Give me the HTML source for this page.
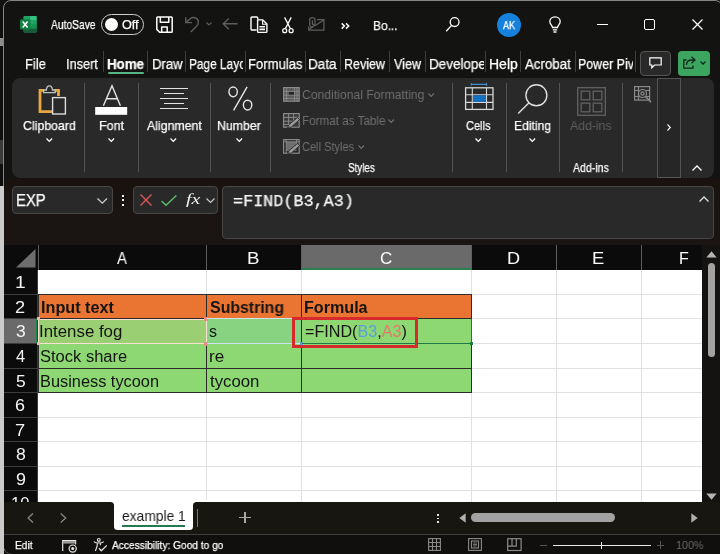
<!DOCTYPE html>
<html>
<head>
<meta charset="utf-8">
<title>Excel</title>
<style>
*{box-sizing:border-box;margin:0;padding:0}
html,body{width:720px;height:554px;overflow:hidden;background:#141210}
body{font-family:"Liberation Sans",sans-serif;color:#fff;position:relative}
.abs{position:absolute}
svg{position:absolute;overflow:visible}
.t{position:absolute;white-space:nowrap;line-height:1;transform-origin:0 50%;will-change:transform}
.w{-webkit-text-stroke:0.25px #fff}
.fbox{position:absolute;background:#292929;border:1px solid #474747;border-radius:4px}
</style>
</head>
<body>
<div class="abs" style="left:3px;top:0;width:720px;height:554px;background:#131311;border:1px solid #868686;border-radius:8px"></div>
<div class="abs" style="left:0px;top:8px;width:3.2px;height:178px;background:#0f0f0f;"></div>
<div class="abs" style="left:0px;top:38px;width:2.6px;height:8px;background:#8e8e8e;"></div>
<div class="abs" style="left:0px;top:140px;width:2.6px;height:24px;background:#3a3a3a;"></div>
<div class="abs" style="left:0;top:186px;width:4.2px;height:368px;background:#cbcbcb"></div>
<svg style="left:20px;top:15.5px" width="17" height="17" viewBox="0 0 17 17">
<path d="M4.6 0 H15.6 Q16.6 0 16.6 1 V15.6 Q16.6 16.6 15.6 16.6 H4.6 Q3.6 16.6 3.6 15.6 V1 Q3.6 0 4.6 0 Z" fill="#21a366"/>
<path d="M10.1 0 H15.6 Q16.6 0 16.6 1 V4.2 H10.1 Z" fill="#33c481"/>
<rect x="3.6" y="0.6" width="6.5" height="3.6" fill="#21a366"/>
<rect x="10.1" y="4.2" width="6.5" height="4.1" fill="#21a366"/>
<rect x="10.1" y="8.3" width="6.5" height="4.1" fill="#129452"/>
<rect x="3.6" y="4.2" width="6.5" height="8.2" fill="#107c41"/>
<path d="M3.6 12.4 H16.6 V15.6 Q16.6 16.6 15.6 16.6 H4.6 Q3.6 16.6 3.6 15.6 Z" fill="#185c37"/>
<rect x="0" y="3.3" width="10.3" height="10.3" rx="1" fill="#117e43"/>
<path d="M2.7 5.5 L7.6 11.5 M7.6 5.5 L2.7 11.5" stroke="#fff" stroke-width="1.6"/>
</svg>
<div class="t w" style="left:50.98px;top:18.30px;font-size:13px;color:#fff;transform:scaleX(0.7890);">AutoSave</div>
<div class="abs" style="left:101px;top:14px;width:43px;height:21px;border:1.5px solid #cfcfcf;border-radius:11px"></div>
<div class="abs" style="left:105px;top:18px;width:13px;height:13px;border-radius:50%;background:#fff"></div>
<div class="t w" style="left:122.40px;top:18.84px;font-size:12px;color:#fff;transform:scaleX(1.0502);">Off</div>
<svg style="left:155.5px;top:16px" width="17" height="17" viewBox="0 0 17 17" fill="none" stroke="#fff" stroke-width="1.5" stroke-linejoin="round">
<path d="M1.6 0.9 H15.4 Q16.2 0.9 16.2 1.7 V15.4 Q16.2 16.2 15.4 16.2 H3.6 L0.8 13.4 V1.7 Q0.8 0.9 1.6 0.9 Z"/><path d="M4.3 1 V6.2 H12.8 V1"/><path d="M5.7 16 V11 H11.2 V16"/></svg>
<svg style="left:185px;top:17px" width="15" height="16" viewBox="0 0 15 16" fill="none" stroke="#5e5e5e" stroke-width="1.4">
<path d="M0.8 0.2 V5.6 H6.9"/><path d="M1 5.4 L5.3 1.7 C8 -0.5 12.5 0.6 13.3 4 C13.8 6.3 12.8 7.8 11.5 9.2 L5.8 15"/></svg>
<svg style="left:206px;top:22px" width="6" height="4" viewBox="0 0 6 4" fill="none" stroke="#5c5c5c" stroke-width="1.2"><path d="M0.5 0.5 L3 3 L5.5 0.5"/></svg>
<svg style="left:222px;top:18px" width="16" height="12" viewBox="0 0 16 12" fill="none" stroke="#5e5e5e" stroke-width="1.4"><path d="M15.6 5.8 H1.2 M6.8 0.5 L1.2 5.8 L6.8 11.3"/></svg>
<svg style="left:250px;top:16px" width="18" height="17" viewBox="0 0 18 17" fill="none" stroke="#fff" stroke-width="1.4" stroke-linejoin="round">
<path d="M6.6 14 H2.2 Q1 14 1 12.8 V2.2 Q1 1 2.2 1 H6.6 Q7.8 1 7.8 2.2 V3.6"/><path d="M7.6 3.9 H12.8 L16.9 8 V15.6 Q16.9 16.4 16.1 16.4 H8.4 Q7.6 16.4 7.6 15.6 Z"/><path d="M12.6 4 V8.2 H16.8" stroke-width="1.1"/><path d="M9.4 10.8 H15 M9.4 13.4 H15" stroke-width="1.6"/></svg>
<svg style="left:281.5px;top:16.5px" width="12" height="17" viewBox="0 0 12 17" fill="none" stroke="#fff" stroke-width="1.25">
<path d="M2.6 0.4 L8.4 11.6 M9.2 0.4 L3.4 11.6"/><circle cx="2.7" cy="13.7" r="2"/><circle cx="9.1" cy="13.7" r="2"/></svg>
<svg style="left:308px;top:16.5px" width="17" height="14" viewBox="0 0 17 14" fill="none" stroke="#5e5e5e" stroke-width="1.25">
<path d="M9 2.6 H15.9 V13 H0.7 V9.5"/><path d="M0.9 12.6 L7.2 8 M15.7 3 L7 8.8"/><path d="M4.4 3.2 V6.4 C4.4 8.2 7 8.2 7 6.4 V2.8 C7 -0.2 1.7 -0.2 1.7 2.8 V7.6 C1.7 10 4 10.4 5.2 10"/></svg>
<svg style="left:340.5px;top:22.5px" width="9" height="6" viewBox="0 0 9 6" fill="none" stroke="#fff" stroke-width="1.5"><path d="M0.7 0.4 L3.4 3 L0.7 5.6 M5 0.4 L7.7 3 L5 5.6"/></svg>
<div class="t w" style="left:373.02px;top:18.50px;font-size:13px;color:#fff;transform:scaleX(0.9190);">Bo...</div>
<svg style="left:445px;top:15px" width="16" height="17" viewBox="0 0 16 17" fill="none" stroke="#fff" stroke-width="1.3"><circle cx="9.6" cy="7.1" r="4.4"/><path d="M6.6 10.4 L1.2 16.3"/></svg>
<div class="abs" style="left:496.7px;top:12.6px;width:24.2px;height:24.2px;border-radius:50%;background:#1681dc"></div>
<div class="t w" style="left:502.98px;top:19.71px;font-size:10.5px;color:#fff;transform:scaleX(0.8653);">AK</div>
<svg style="left:549px;top:16.3px" width="12" height="17" viewBox="0 0 12 17" fill="none" stroke="#fff" stroke-width="1.3">
<path d="M3.5 11.5 C3.5 9.5 0.8 8.5 0.8 5.5 C0.8 2.8 3 0.8 6 0.8 C9 0.8 11.2 2.8 11.2 5.5 C11.2 8.5 8.5 9.5 8.5 11.5 Z"/><path d="M3.8 13.8 H8.2 M4.5 16 H7.5"/></svg>
<div class="abs" style="left:597px;top:23.5px;width:11px;height:1.3px;background:#fff;"></div>
<div class="abs" style="left:644px;top:19px;width:11px;height:11px;border:1.4px solid #fff;border-radius:2px"></div>
<svg style="left:692px;top:19px" width="11" height="11" viewBox="0 0 11 11" fill="none" stroke="#fff" stroke-width="1.3"><path d="M0.5 0.5 L10.5 10.5 M10.5 0.5 L0.5 10.5"/></svg>
<div class="t w" style="left:24.63px;top:57.15px;font-size:14px;color:#fff;transform:scaleX(0.9284);">File</div>
<div class="t w" style="left:65.52px;top:57.15px;font-size:14px;color:#fff;transform:scaleX(0.9102);">Insert</div>
<div class="t w" style="left:107.41px;top:57.15px;font-size:14px;color:#fff;font-weight:bold;transform:scaleX(0.9525);">Home</div>
<div class="abs" style="left:108.3px;top:72px;width:35.7px;height:2.3px;background:#57b583;border-radius:1px"></div>
<div class="t w" style="left:151.62px;top:57.15px;font-size:14px;color:#fff;transform:scaleX(0.9380);">Draw</div>
<div class="t w" style="left:189.13px;top:57.15px;font-size:14px;color:#fff;transform:scaleX(0.8486);clip-path:inset(-5px 14.77px -5px 0);">Page Layout</div>
<div class="t w" style="left:248.23px;top:57.15px;font-size:14px;color:#fff;transform:scaleX(0.9349);">Formulas</div>
<div class="t w" style="left:308.19px;top:57.15px;font-size:14px;color:#fff;transform:scaleX(0.9640);">Data</div>
<div class="t w" style="left:343.97px;top:57.15px;font-size:14px;color:#fff;transform:scaleX(0.8930);">Review</div>
<div class="t w" style="left:393.94px;top:57.15px;font-size:14px;color:#fff;transform:scaleX(0.8981);">View</div>
<div class="t w" style="left:428.59px;top:57.15px;font-size:14px;color:#fff;transform:scaleX(0.9631);clip-path:inset(-5px 7.43px -5px 0);">Developer</div>
<div class="t w" style="left:488.87px;top:57.15px;font-size:14px;color:#fff;transform:scaleX(0.9868);">Help</div>
<div class="t w" style="left:525.27px;top:57.15px;font-size:14px;color:#fff;transform:scaleX(0.9498);">Acrobat</div>
<div class="t w" style="left:577.88px;top:57.15px;font-size:14px;color:#fff;transform:scaleX(0.8882);clip-path:inset(-5px 13.54px -5px 0);">Power Pivot</div>
<div class="abs" style="left:102.8px;top:51px;width:1px;height:21px;background:#404040;"></div>
<div class="abs" style="left:147.2px;top:51px;width:1px;height:21px;background:#404040;"></div>
<div class="abs" style="left:185.2px;top:51px;width:1px;height:21px;background:#404040;"></div>
<div class="abs" style="left:245.2px;top:51px;width:1px;height:21px;background:#404040;"></div>
<div class="abs" style="left:305.2px;top:51px;width:1px;height:21px;background:#404040;"></div>
<div class="abs" style="left:339.5px;top:51px;width:1px;height:21px;background:#404040;"></div>
<div class="abs" style="left:388.8px;top:51px;width:1px;height:21px;background:#404040;"></div>
<div class="abs" style="left:425.0px;top:51px;width:1px;height:21px;background:#404040;"></div>
<div class="abs" style="left:485.2px;top:51px;width:1px;height:21px;background:#404040;"></div>
<div class="abs" style="left:520.2px;top:51px;width:1px;height:21px;background:#404040;"></div>
<div class="abs" style="left:574.5px;top:51px;width:1px;height:21px;background:#404040;"></div>
<div class="abs" style="left:634.5px;top:51px;width:1px;height:21px;background:#404040;"></div>
<div class="abs" style="left:640px;top:51px;width:31px;height:25px;background:#292929;border:1px solid #555;border-radius:4px"></div>
<svg style="left:649px;top:57px" width="13" height="12" viewBox="0 0 13 12" fill="none" stroke="#fff" stroke-width="1.2"><path d="M0.8 0.8 H12.2 V8 H5.5 L2.8 10.8 V8 H0.8 Z"/></svg>
<div class="abs" style="left:678px;top:51px;width:32px;height:25px;background:#3ca55f;border-radius:4px"></div>
<svg style="left:683px;top:56px" width="13" height="13" viewBox="0 0 13 13" fill="none" stroke="#0e2a18" stroke-width="1.3"><path d="M3.5 4 H0.8 V12.2 H10 V9.5"/><path d="M3.5 9 C3.5 5.5 6 4 9 4 H11.5 M8.5 0.8 L12 4 L8.5 7.2"/></svg>
<svg style="left:699.5px;top:61px" width="6" height="4" viewBox="0 0 6 4" fill="none" stroke="#0e2a18" stroke-width="1.3"><path d="M0.5 0.5 L3 3 L5.5 0.5"/></svg>
<div class="abs" style="left:12px;top:78px;width:701.5px;height:100px;background:#292929;border-radius:8px"></div>
<div class="abs" style="left:84.0px;top:83px;width:1px;height:89px;background:#545454;"></div>
<div class="abs" style="left:137.8px;top:83px;width:1px;height:89px;background:#545454;"></div>
<div class="abs" style="left:209.5px;top:83px;width:1px;height:89px;background:#545454;"></div>
<div class="abs" style="left:270.0px;top:83px;width:1px;height:89px;background:#545454;"></div>
<div class="abs" style="left:451.9px;top:83px;width:1px;height:89px;background:#545454;"></div>
<div class="abs" style="left:505.5px;top:83px;width:1px;height:89px;background:#545454;"></div>
<div class="abs" style="left:558.9px;top:83px;width:1px;height:89px;background:#545454;"></div>
<div class="abs" style="left:621.5px;top:83px;width:1px;height:89px;background:#545454;"></div>
<svg style="left:38px;top:85px" width="29" height="30" viewBox="0 0 29 30" fill="none">
<path d="M6 5.4 H2 V26.6 H14" stroke="#eaa640" stroke-width="2.8"/><path d="M16.5 5.4 H20.5 V11" stroke="#eaa640" stroke-width="2.8"/>
<path d="M5.6 7.6 V5 H8.4 C8.6 -0.6 14.2 -0.6 14.4 5 H17.2 V7.6 Z" stroke="#c4c4c4" stroke-width="1.3" fill="#292929"/>
<rect x="14.6" y="12.6" width="12.8" height="16.4" stroke="#dcdcdc" stroke-width="1.4" fill="#292929"/></svg>
<div class="t w" style="left:22.97px;top:118.60px;font-size:13px;color:#fff;transform:scaleX(0.9493);">Clipboard</div>
<svg style="left:45.7px;top:137.95000000000002px" width="6.6" height="3.9" viewBox="0 0 6.6 3.9" fill="none" stroke="#fff" stroke-width="1.3"><path d="M0.5 0.5 L3.3 3.4 L6.1 0.5"/></svg>
<svg style="left:95px;top:84px" width="33" height="31" viewBox="0 0 33 31" fill="none"><path d="M8.4 21.8 L17 1.8 L25.4 21.8 M11.4 14.8 H22.4" stroke="#e6e6e6" stroke-width="1.4"/><rect x="0.2" y="23" width="32" height="7.8" fill="#fff"/></svg>
<div class="t w" style="left:98.68px;top:118.60px;font-size:13px;color:#fff;transform:scaleX(0.9577);">Font</div>
<svg style="left:107.7px;top:137.95000000000002px" width="6.6" height="3.9" viewBox="0 0 6.6 3.9" fill="none" stroke="#fff" stroke-width="1.3"><path d="M0.5 0.5 L3.3 3.4 L6.1 0.5"/></svg>
<div class="abs" style="left:159.8px;top:87.6px;width:28.19999999999999px;height:1.2px;background:#e4e4e4;"></div>
<div class="abs" style="left:164px;top:92.7px;width:20px;height:1.2px;background:#e4e4e4;"></div>
<div class="abs" style="left:159.8px;top:97.7px;width:28.19999999999999px;height:1.2px;background:#e4e4e4;"></div>
<div class="abs" style="left:164px;top:102.8px;width:20px;height:1.2px;background:#e4e4e4;"></div>
<div class="abs" style="left:159.8px;top:107.8px;width:28.19999999999999px;height:1.2px;background:#e4e4e4;"></div>
<div class="t w" style="left:146.68px;top:118.60px;font-size:13px;color:#fff;transform:scaleX(0.9465);">Alignment</div>
<svg style="left:169.7px;top:137.95000000000002px" width="6.6" height="3.9" viewBox="0 0 6.6 3.9" fill="none" stroke="#fff" stroke-width="1.3"><path d="M0.5 0.5 L3.3 3.4 L6.1 0.5"/></svg>
<svg style="left:227.6px;top:86.4px" width="25.2" height="25.4" viewBox="0 0 27 26" preserveAspectRatio="none" fill="none" stroke="#e6e6e6" stroke-width="1.5"><ellipse cx="5.5" cy="6" rx="4.5" ry="5"/><ellipse cx="21" cy="19.5" rx="4.5" ry="5"/><path d="M20.5 1 L6 25"/></svg>
<div class="t w" style="left:217.49px;top:118.60px;font-size:13px;color:#fff;transform:scaleX(0.9454);">Number</div>
<svg style="left:236.2px;top:137.95000000000002px" width="6.6" height="3.9" viewBox="0 0 6.6 3.9" fill="none" stroke="#fff" stroke-width="1.3"><path d="M0.5 0.5 L3.3 3.4 L6.1 0.5"/></svg>
<svg style="left:282.5px;top:86.8px" width="17" height="15" viewBox="0 0 17 15" fill="none" stroke="#909090" stroke-width="1.1"><rect x="0.6" y="0.6" width="15.6" height="13.6" fill="#5a5a5a"/><rect x="6" y="4.6" width="5" height="3.6" fill="#262626" stroke="none"/><path d="M0.6 4.4 H16.2 M0.6 8.2 H16.2 M0.6 11.4 H16.2 M3.6 0.6 V14.2 M11.6 0.6 V14.2 M14 0.6 V14.2" stroke="#8a8a8a" stroke-width="0.9"/></svg>
<svg style="left:282.5px;top:112.8px" width="17" height="15" viewBox="0 0 17 15" fill="none" stroke="#909090" stroke-width="1.1"><rect x="0.6" y="0.6" width="15.6" height="13.6" fill="#3a3a3a"/><path d="M0.6 4.4 H16.2 M0.6 8.2 H16.2 M0.6 11.4 H8 M5.6 0.6 V14.2 M10.6 0.6 V8" stroke-width="0.9"/><path d="M4.6 14.4 L6 11.6 L14.4 4.6 L16.6 6.6 L8.4 14 Z" fill="#9a9a9a" stroke="#292929" stroke-width="0.9"/></svg>
<svg style="left:282.5px;top:138.8px" width="17" height="15" viewBox="0 0 17 15" fill="none" stroke="#909090" stroke-width="1.1"><rect x="0.6" y="0.6" width="15.6" height="13.6"/><rect x="3.4" y="3" width="10" height="9" fill="#6e6e6e" stroke="none"/><path d="M0.6 2.8 H16.2 M3.2 0.6 V14.2 M13.6 0.6 V7" stroke-width="0.9"/><path d="M4.6 14.4 L6 11.6 L14.4 4.6 L16.6 6.6 L8.4 14 Z" fill="#9a9a9a" stroke="#292929" stroke-width="0.9"/></svg>
<div class="t" style="left:302.38px;top:88.30px;font-size:13px;color:#6e6e6e;transform:scaleX(0.9359);">Conditional Formatting</div>
<svg style="left:428.1px;top:92.8px" width="6.4" height="3.8" viewBox="0 0 6.4 3.8" fill="none" stroke="#6e6e6e" stroke-width="1.2"><path d="M0.5 0.5 L3.2 3.3 L5.9 0.5"/></svg>
<div class="t" style="left:302.04px;top:114.20px;font-size:13px;color:#6e6e6e;transform:scaleX(0.8979);">Format as Table</div>
<svg style="left:388.3px;top:118.6px" width="6.4" height="3.8" viewBox="0 0 6.4 3.8" fill="none" stroke="#6e6e6e" stroke-width="1.2"><path d="M0.5 0.5 L3.2 3.3 L5.9 0.5"/></svg>
<div class="t" style="left:302.44px;top:140.30px;font-size:13px;color:#6e6e6e;transform:scaleX(0.8461);">Cell Styles</div>
<svg style="left:358.0px;top:144.79999999999998px" width="6.4" height="3.8" viewBox="0 0 6.4 3.8" fill="none" stroke="#6e6e6e" stroke-width="1.2"><path d="M0.5 0.5 L3.2 3.3 L5.9 0.5"/></svg>
<div class="t w" style="left:347.55px;top:162.34px;font-size:12px;color:#fff;transform:scaleX(0.8202);">Styles</div>
<svg style="left:465px;top:83px" width="29" height="28" viewBox="0 0 29 28" fill="none">
<path d="M6.2 1.4 H21.6 M6.2 0 V2.8 M21.6 0 V2.8" stroke="#3f8fd0" stroke-width="1.1"/>
<rect x="0.6" y="4.8" width="27.4" height="21.6" stroke="#d8d8d8" stroke-width="1.3"/><path d="M0.6 11.8 H28 M0.6 19.4 H28 M7.3 4.8 V26.4 M21.5 4.8 V26.4" stroke="#d8d8d8" stroke-width="1.1"/>
<rect x="7.9" y="12.4" width="13" height="6.4" fill="#1470c4"/></svg>
<div class="t w" style="left:466.44px;top:118.60px;font-size:13px;color:#fff;transform:scaleX(0.8465);">Cells</div>
<svg style="left:475.2px;top:137.95000000000002px" width="6.6" height="3.9" viewBox="0 0 6.6 3.9" fill="none" stroke="#fff" stroke-width="1.3"><path d="M0.5 0.5 L3.3 3.4 L6.1 0.5"/></svg>
<svg style="left:517px;top:83px" width="32" height="32" viewBox="0 0 32 32" fill="none" stroke="#e0e0e0" stroke-width="1.4"><circle cx="19.4" cy="12.3" r="10.5"/><path d="M12 19.7 L1.2 30.6"/></svg>
<div class="t w" style="left:513.71px;top:118.60px;font-size:13px;color:#fff;transform:scaleX(0.9328);">Editing</div>
<svg style="left:529.0px;top:137.95000000000002px" width="6.6" height="3.9" viewBox="0 0 6.6 3.9" fill="none" stroke="#fff" stroke-width="1.3"><path d="M0.5 0.5 L3.3 3.4 L6.1 0.5"/></svg>
<svg style="left:577px;top:87px" width="29" height="29" viewBox="0 0 29 29" fill="none" stroke="#5e5e5e" stroke-width="1.4"><rect x="0.7" y="0.7" width="27.6" height="27.6"/><rect x="4.2" y="4.2" width="8.6" height="8.6"/><rect x="16.2" y="4.2" width="8.6" height="8.6"/><rect x="4.2" y="16.2" width="8.6" height="8.6"/><rect x="16.2" y="16.2" width="8.6" height="8.6"/></svg>
<div class="t" style="left:569.98px;top:118.60px;font-size:13px;color:#5e5e5e;transform:scaleX(0.9408);">Add-ins</div>
<div class="t w" style="left:572.98px;top:162.04px;font-size:12px;color:#fff;transform:scaleX(0.8799);">Add-ins</div>
<svg style="left:634px;top:86px" width="18" height="17" viewBox="0 0 18 17" fill="none" stroke="#8a8a8a" stroke-width="1.2"><rect x="0.6" y="0.6" width="15" height="13.5"/><path d="M0.6 4.5 H15.6 M0.6 10.5 H15.6 M4.5 0.6 V14"/><circle cx="8.5" cy="7.5" r="4" fill="#292929"/><circle cx="8.5" cy="7.5" r="1.6"/><path d="M11.5 10.5 L17 16.2" stroke-width="1.6"/></svg>
<div class="abs" style="left:657px;top:78px;width:24px;height:100px;background:#262626;border:1px solid #555"></div>
<svg style="left:667px;top:124px" width="4" height="7" viewBox="0 0 4 7" fill="none" stroke="#fff" stroke-width="1.1"><path d="M0.5 0.5 L3.3 3.5 L0.5 6.5"/></svg>
<svg style="left:692px;top:165px" width="10" height="6" viewBox="0 0 10 6" fill="none" stroke="#fff" stroke-width="1.3"><path d="M0.5 5.5 L5 1 L9.5 5.5"/></svg>
<div class="abs" style="left:4px;top:179px;width:716px;height:67px;background:linear-gradient(#19120f,#1a1412 40%)"></div>
<div class="fbox" style="left:12px;top:186px;width:101px;height:28px"></div>
<div class="t w" style="left:16.08px;top:193.06px;font-size:16px;color:#fff;transform:scaleX(0.9277);">EXP</div>
<svg style="left:96.75px;top:198.39999999999998px" width="10.5" height="5.6" viewBox="0 0 10.5 5.6" fill="none" stroke="#d0d0d0" stroke-width="1.3"><path d="M0.5 0.5 L5.25 5.1 L10.0 0.5"/></svg>
<div class="abs" style="left:121.8px;top:194.9px;width:2.1px;height:2.1px;background:#f0f0f0;"></div>
<div class="abs" style="left:121.8px;top:199.2px;width:2.1px;height:2.1px;background:#f0f0f0;"></div>
<div class="abs" style="left:121.8px;top:203.5px;width:2.1px;height:2.1px;background:#f0f0f0;"></div>
<div class="fbox" style="left:133px;top:186px;width:85px;height:28px"></div>
<svg style="left:139.5px;top:194px" width="12" height="12" viewBox="0 0 12 12" fill="none" stroke="#e25757" stroke-width="1.3"><path d="M0.5 0.5 L11.5 11.5 M11.5 0.5 L0.5 11.5"/></svg>
<svg style="left:161px;top:194.5px" width="16" height="11" viewBox="0 0 16 11" fill="none" stroke="#5cbf6a" stroke-width="1.4"><path d="M0.6 6 L5 10.2 L15.4 0.6"/></svg>
<div class="t" style="left:186.48px;top:192.44px;font-size:15px;color:#f0f0f0;font-style:italic;font-family:'Liberation Serif',serif;transform:scaleX(1.3274);">fx</div>
<svg style="left:206.0px;top:198.0px" width="9" height="5" viewBox="0 0 9 5" fill="none" stroke="#c8c8c8" stroke-width="1.2"><path d="M0.5 0.5 L4.5 4.5 L8.5 0.5"/></svg>
<div class="fbox" style="left:222px;top:186px;width:492px;height:52.7px"></div>
<div class="t w" style="left:233.35px;top:193.37px;font-size:17px;color:#f2f2f2;font-family:'Liberation Mono',serif;transform:scaleX(0.9873);">=FIND(B3,A3)</div>
<svg style="left:698.7px;top:195.5px" width="10" height="6" viewBox="0 0 10 6" fill="none" stroke="#e0e0e0" stroke-width="1.3"><path d="M0.5 5.5 L5 1 L9.5 5.5"/></svg>
<div class="abs" style="left:4px;top:245px;width:698px;height:24.7px;background:#0b0b0b;"></div>
<div class="abs" style="left:4px;top:270px;width:34px;height:232px;background:#0b0b0b;"></div>
<div class="abs" style="left:38px;top:269.7px;width:663.5px;height:232.3px;background:#fff;"></div>
<div class="abs" style="left:301.5px;top:245px;width:169.8px;height:24.7px;background:#6a6a6a;"></div>
<div class="abs" style="left:301.5px;top:268.2px;width:169.8px;height:1.5px;background:#2a7f50;"></div>
<svg style="left:16px;top:249px" width="20" height="19" viewBox="0 0 20 19"><path d="M19.5 0 V18.5 H0 Z" fill="#6e6e6e"/></svg>
<div class="t" style="left:117.01px;top:250.76px;font-size:16px;color:#fdfdfd;transform:scaleX(0.9355);">A</div>
<div class="abs" style="left:37.5px;top:245px;width:1px;height:24.7px;background:#5e5e5e;"></div>
<div class="t" style="left:247.26px;top:250.76px;font-size:16px;color:#fdfdfd;transform:scaleX(1.1655);">B</div>
<div class="abs" style="left:205.5px;top:245px;width:1px;height:24.7px;background:#5e5e5e;"></div>
<div class="t" style="left:380.17px;top:250.76px;font-size:16px;color:#fdfdfd;transform:scaleX(1.0605);">C</div>
<div class="abs" style="left:301.0px;top:245px;width:1px;height:24.7px;background:#5e5e5e;"></div>
<div class="t" style="left:506.79px;top:250.76px;font-size:16px;color:#fdfdfd;transform:scaleX(1.1339);">D</div>
<div class="abs" style="left:470.8px;top:245px;width:1px;height:24.7px;background:#5e5e5e;"></div>
<div class="t" style="left:592.04px;top:250.76px;font-size:16px;color:#fdfdfd;transform:scaleX(1.1445);">E</div>
<div class="abs" style="left:555.5px;top:245px;width:1px;height:24.7px;background:#5e5e5e;"></div>
<div class="t" style="left:679.19px;top:250.76px;font-size:16px;color:#fdfdfd;transform:scaleX(0.9974);">F</div>
<div class="abs" style="left:640.5px;top:245px;width:1px;height:24.7px;background:#5e5e5e;"></div>
<div class="abs" style="left:38px;top:293.5px;width:664px;height:1px;background:#e1e1e1;"></div>
<div class="abs" style="left:38px;top:318.0px;width:664px;height:1px;background:#e1e1e1;"></div>
<div class="abs" style="left:38px;top:342.8px;width:664px;height:1px;background:#e1e1e1;"></div>
<div class="abs" style="left:38px;top:367.5px;width:664px;height:1px;background:#e1e1e1;"></div>
<div class="abs" style="left:38px;top:392.0px;width:664px;height:1px;background:#e1e1e1;"></div>
<div class="abs" style="left:38px;top:416.5px;width:664px;height:1px;background:#e1e1e1;"></div>
<div class="abs" style="left:38px;top:441.0px;width:664px;height:1px;background:#e1e1e1;"></div>
<div class="abs" style="left:38px;top:465.5px;width:664px;height:1px;background:#e1e1e1;"></div>
<div class="abs" style="left:38px;top:490.0px;width:664px;height:1px;background:#e1e1e1;"></div>
<div class="abs" style="left:205.5px;top:270px;width:1px;height:232px;background:#e1e1e1;"></div>
<div class="abs" style="left:301.0px;top:270px;width:1px;height:232px;background:#e1e1e1;"></div>
<div class="abs" style="left:470.8px;top:270px;width:1px;height:232px;background:#e1e1e1;"></div>
<div class="abs" style="left:555.5px;top:270px;width:1px;height:232px;background:#e1e1e1;"></div>
<div class="abs" style="left:640.5px;top:270px;width:1px;height:232px;background:#e1e1e1;"></div>
<div class="abs" style="left:4px;top:318.5px;width:33.5px;height:24.8px;background:#6a6a6a;"></div>
<div class="abs" style="left:36.2px;top:318.5px;width:1.3px;height:24.8px;background:#1e8a4c;"></div>
<div class="abs" style="left:4px;top:293.5px;width:33.5px;height:1px;background:#3c3c3c;"></div>
<div class="t" style="left:14.90px;top:275.16px;font-size:16px;color:#f4f4f4;transform:scaleX(1.1996);">1</div>
<div class="abs" style="left:4px;top:318.0px;width:33.5px;height:1px;background:#3c3c3c;"></div>
<div class="t" style="left:15.45px;top:299.66px;font-size:16px;color:#f4f4f4;transform:scaleX(1.1353);">2</div>
<div class="abs" style="left:4px;top:342.8px;width:33.5px;height:1px;background:#3c3c3c;"></div>
<div class="t" style="left:15.70px;top:324.46px;font-size:16px;color:#f4f4f4;transform:scaleX(1.0909);">3</div>
<div class="abs" style="left:4px;top:367.5px;width:33.5px;height:1px;background:#3c3c3c;"></div>
<div class="t" style="left:15.99px;top:349.16px;font-size:16px;color:#f4f4f4;transform:scaleX(1.0264);">4</div>
<div class="abs" style="left:4px;top:392.0px;width:33.5px;height:1px;background:#3c3c3c;"></div>
<div class="t" style="left:15.66px;top:373.66px;font-size:16px;color:#f4f4f4;transform:scaleX(1.0909);">5</div>
<div class="abs" style="left:4px;top:416.5px;width:33.5px;height:1px;background:#3c3c3c;"></div>
<div class="t" style="left:15.45px;top:398.16px;font-size:16px;color:#f4f4f4;transform:scaleX(1.1209);">6</div>
<div class="abs" style="left:4px;top:441.0px;width:33.5px;height:1px;background:#3c3c3c;"></div>
<div class="t" style="left:15.43px;top:422.66px;font-size:16px;color:#f4f4f4;transform:scaleX(1.1378);">7</div>
<div class="abs" style="left:4px;top:465.5px;width:33.5px;height:1px;background:#3c3c3c;"></div>
<div class="t" style="left:15.60px;top:447.16px;font-size:16px;color:#f4f4f4;transform:scaleX(1.1023);">8</div>
<div class="abs" style="left:4px;top:490.0px;width:33.5px;height:1px;background:#3c3c3c;"></div>
<div class="t" style="left:15.52px;top:471.66px;font-size:16px;color:#f4f4f4;transform:scaleX(1.1197);">9</div>
<div class="abs" style="left:4px;top:514.5px;width:33.5px;height:1px;background:#3c3c3c;"></div>
<div class="t" style="left:10.96px;top:496.16px;font-size:16px;color:#f4f4f4;transform:scaleX(1.0375);">10</div>
<div class="abs" style="left:37px;top:270px;width:1px;height:232px;background:#3c3c3c;"></div>
<div class="abs" style="left:38px;top:294px;width:433.3px;height:24.5px;background:#ea7431;"></div>
<div class="abs" style="left:38px;top:318.5px;width:433.3px;height:74px;background:#8dd873;"></div>
<div class="abs" style="left:38px;top:318.5px;width:168px;height:24.8px;background:#9bcf73;"></div>
<div class="abs" style="left:206px;top:318.5px;width:95.5px;height:24.8px;background:#87d382;"></div>
<div class="abs" style="left:38px;top:293.5px;width:433.3px;height:1px;background:#2b2b2b;"></div>
<div class="abs" style="left:38px;top:318.0px;width:433.3px;height:1px;background:#2b2b2b;"></div>
<div class="abs" style="left:38px;top:342.8px;width:433.3px;height:1px;background:#2b2b2b;"></div>
<div class="abs" style="left:38px;top:367.5px;width:433.3px;height:1px;background:#2b2b2b;"></div>
<div class="abs" style="left:38px;top:392.0px;width:433.3px;height:1px;background:#2b2b2b;"></div>
<div class="abs" style="left:37.5px;top:294px;width:1px;height:98.5px;background:#2b2b2b;"></div>
<div class="abs" style="left:205.5px;top:294px;width:1px;height:98.5px;background:#2b2b2b;"></div>
<div class="abs" style="left:301.0px;top:294px;width:1px;height:98.5px;background:#2b2b2b;"></div>
<div class="abs" style="left:470.8px;top:294px;width:1px;height:98.5px;background:#2b2b2b;"></div>
<div class="t" style="left:40.62px;top:299.86px;font-size:16px;color:#141414;font-weight:bold;transform:scaleX(1.0123);">Input text</div>
<div class="t" style="left:209.54px;top:299.86px;font-size:16px;color:#141414;font-weight:bold;transform:scaleX(0.9913);">Substring</div>
<div class="t" style="left:304.32px;top:299.86px;font-size:16px;color:#141414;font-weight:bold;transform:scaleX(1.0073);">Formula</div>
<div class="t" style="left:39.45px;top:324.46px;font-size:16px;color:#141414;transform:scaleX(1.0526);">Intense fog</div>
<div class="t" style="left:40.25px;top:349.36px;font-size:16px;color:#141414;transform:scaleX(1.0319);">Stock share</div>
<div class="t" style="left:40.36px;top:373.86px;font-size:16px;color:#141414;transform:scaleX(1.0214);">Business tycoon</div>
<div class="t" style="left:209.27px;top:324.46px;font-size:16px;color:#141414;transform:scaleX(0.9747);">s</div>
<div class="t" style="left:208.87px;top:349.36px;font-size:16px;color:#141414;transform:scaleX(1.0680);">re</div>
<div class="t" style="left:209.75px;top:373.86px;font-size:16px;color:#141414;transform:scaleX(1.0467);">tycoon</div>
<div class="abs" style="left:38px;top:318.5px;width:168.5px;height:25.2px;border:1.5px solid #f7e2d3"></div>
<div class="abs" style="left:204px;top:316.7px;width:4px;height:4px;background:#ea8c82;"></div>
<div class="abs" style="left:204px;top:341.5px;width:4px;height:4px;background:#ea8c82;"></div>
<div class="abs" style="left:36.8px;top:317.0px;width:3px;height:3.2px;background:#f0b9ae;"></div>
<div class="abs" style="left:36.8px;top:341.8px;width:3px;height:3.2px;background:#f0b9ae;"></div>
<div class="abs" style="left:207px;top:318.3px;width:94.5px;height:25.6px;border:1.5px solid #cde3f1;border-left:none;border-right:none"></div>
<div class="abs" style="left:299.5px;top:341.5px;width:3.5px;height:3.5px;background:#5b9bd5;"></div>
<div class="abs" style="left:301.5px;top:342.6px;width:170px;height:1.4px;background:#1d7a45;"></div>
<div class="abs" style="left:470.6px;top:318.5px;width:1.4px;height:25px;background:#1d7a45;"></div>
<div class="abs" style="left:469.5px;top:341.5px;width:3.5px;height:3.5px;background:#1d7a45;"></div>
<div class="t" style="left:304.6119779353822px;top:324.46px;font-size:16px;transform:scaleX(1.0087)"><span style="color:#141414">=FIND(</span><span style="color:#5aa0d8">B3</span><span style="color:#141414">,</span><span style="color:#e07c68">A3</span><span style="color:#141414">)</span></div>
<div class="abs" style="left:291.7px;top:317.4px;width:126.2px;height:30.4px;border:3px solid #d62a2d"></div>
<div class="abs" style="left:702px;top:245px;width:18px;height:257px;background:#151311;"></div>
<svg style="left:706px;top:251px" width="11" height="7" viewBox="0 0 11 7"><path d="M5.5 0.3 L10.7 6.6 H0.3 Z" fill="#b4b4b4"/></svg>
<div class="abs" style="left:707.8px;top:263px;width:7.6px;height:94px;background:#a2a2a2;border-radius:3.8px"></div>
<svg style="left:706px;top:493px" width="11" height="7" viewBox="0 0 11 7"><path d="M5.5 6.7 L10.7 0.4 H0.3 Z" fill="#b4b4b4"/></svg>
<div class="abs" style="left:4px;top:502px;width:716px;height:33px;background:#12100f;"></div>
<div class="abs" style="left:100px;top:500px;width:110px;height:10px;background:#fff;"></div>
<div class="abs" style="left:4px;top:502.3px;width:109.8px;height:32px;background:#171611;border-radius:3px 3.5px 0 0"></div>
<div class="abs" style="left:193.4px;top:502.3px;width:527px;height:32px;background:#171611;border-radius:3.5px 0 0 0"></div>
<div class="abs" style="left:112px;top:520px;width:84px;height:14.3px;background:#171611;"></div>
<div class="abs" style="left:113.8px;top:501px;width:79.6px;height:29.3px;background:#fff;border-radius:0 0 3.5px 3.5px"></div>
<div class="t" style="left:121.91px;top:508.53px;font-size:14.5px;color:#1c1c1c;transform:scaleX(0.9531);">example 1</div>
<div class="abs" style="left:122.2px;top:525.2px;width:62.8px;height:2.2px;background:#237a4d;"></div>
<div class="abs" style="left:196.8px;top:508.5px;width:1px;height:18.3px;background:#777;"></div>
<svg style="left:27px;top:512.6px" width="7" height="10" viewBox="0 0 7 10" fill="none" stroke="#8c8c8c" stroke-width="1.2"><path d="M6 0.5 L1 5 L6 9.5"/></svg>
<svg style="left:60px;top:512.6px" width="7" height="10" viewBox="0 0 7 10" fill="none" stroke="#8c8c8c" stroke-width="1.2"><path d="M0.7 0.5 L5.7 5 L0.7 9.5"/></svg>
<div class="abs" style="left:239.3px;top:516.8px;width:11.5px;height:1.2px;background:#a8a8a8;"></div>
<div class="abs" style="left:244.4px;top:511.6px;width:1.2px;height:11.5px;background:#a8a8a8;"></div>
<div class="abs" style="left:437.2px;top:513.8px;width:1.8px;height:1.8px;background:#e6e6e6;"></div>
<div class="abs" style="left:437.2px;top:517.6px;width:1.8px;height:1.8px;background:#e6e6e6;"></div>
<div class="abs" style="left:437.2px;top:521.4px;width:1.8px;height:1.8px;background:#e6e6e6;"></div>
<svg style="left:458.5px;top:512.5px" width="7" height="10" viewBox="0 0 7 10"><path d="M0.3 5 L6.7 0.2 V9.8 Z" fill="#b0b0b0"/></svg>
<svg style="left:691px;top:512.5px" width="7" height="10" viewBox="0 0 7 10"><path d="M6.7 5 L0.3 0.2 V9.8 Z" fill="#b0b0b0"/></svg>
<div class="abs" style="left:471px;top:513px;width:144px;height:9px;background:#a2a2a2;border-radius:4.5px"></div>
<div class="abs" style="left:4px;top:534px;width:716px;height:19.5px;background:#100f0e;border-top:1px solid #3e3e3e;border-radius:0 0 0 8px"></div>
<div class="t w" style="left:14.87px;top:539.69px;font-size:11px;color:#fff;transform:scaleX(0.9237);">Edit</div>
<svg style="left:62px;top:539.5px" width="16" height="13" viewBox="0 0 16 13" fill="none" stroke="#e6e6e6" stroke-width="1.2"><path d="M0.7 11 V0.7 H13.6 V4.5"/><rect x="1" y="1" width="12.3" height="2.6" fill="#9a9a9a" stroke="none"/><circle cx="10.7" cy="8.6" r="3.6" fill="#100f0e"/><circle cx="10.7" cy="8.6" r="1.5" fill="#e6e6e6" stroke="none"/></svg>
<svg style="left:93.3px;top:538px" width="15" height="14" viewBox="0 0 15 14" fill="none" stroke="#e6e6e6" stroke-width="1.15" stroke-linejoin="round"><circle cx="5.8" cy="1.9" r="1.4"/><path d="M0.8 3.6 C2.5 5 4 5 5.8 5 C7.6 5 9.2 5 10.8 3.6 M4.2 5.2 V8 L2.4 13 M7.4 5.2 V7.2"/><path d="M6 10.2 L8.3 12.8 L13.8 7.4" stroke-width="1.3"/></svg>
<div class="t w" style="left:111.68px;top:539.69px;font-size:11px;color:#fff;transform:scaleX(0.9253);">Accessibility: Good to go</div>
<svg style="left:428px;top:538px" width="13" height="13" viewBox="0 0 13 13" fill="none" stroke="#8a8a8a" stroke-width="1.1"><rect x="0.6" y="0.6" width="11.8" height="11.8"/><path d="M0.6 4.5 H12.4 M0.6 8.5 H12.4 M4.5 0.6 V12.4 M8.5 0.6 V12.4"/></svg>
<svg style="left:468px;top:538px" width="14" height="13" viewBox="0 0 14 13" fill="none" stroke="#8a8a8a" stroke-width="1.1"><rect x="0.6" y="0.6" width="12.8" height="11.8"/><rect x="3.5" y="3" width="7" height="7"/><path d="M5 5 H9 M5 6.5 H9 M5 8 H9" stroke-width="0.8"/></svg>
<svg style="left:507px;top:538px" width="15" height="13" viewBox="0 0 15 13" fill="none" stroke="#8a8a8a" stroke-width="1.2"><rect x="0.7" y="0.7" width="13.4" height="11.8"/><path d="M5 0.7 V8.2 M9.3 0.7 V8.2 H0.7"/></svg>
<div class="abs" style="left:540px;top:544.5px;width:6.5px;height:1px;background:#555;"></div>
<div class="abs" style="left:552.5px;top:544.5px;width:98.5px;height:1.1px;background:#e8e8e8;"></div>
<div class="abs" style="left:601.2px;top:541.5px;width:1.3px;height:7.5px;background:#e8e8e8;"></div>
<div class="abs" style="left:656.5px;top:544.5px;width:7.5px;height:1px;background:#555;"></div>
<div class="abs" style="left:659.8px;top:541.2px;width:1px;height:7.5px;background:#555;"></div>
<div class="t" style="left:676.18px;top:539.69px;font-size:11px;color:#6a6a6a;transform:scaleX(0.9776);">100%</div>
</body>
</html>
